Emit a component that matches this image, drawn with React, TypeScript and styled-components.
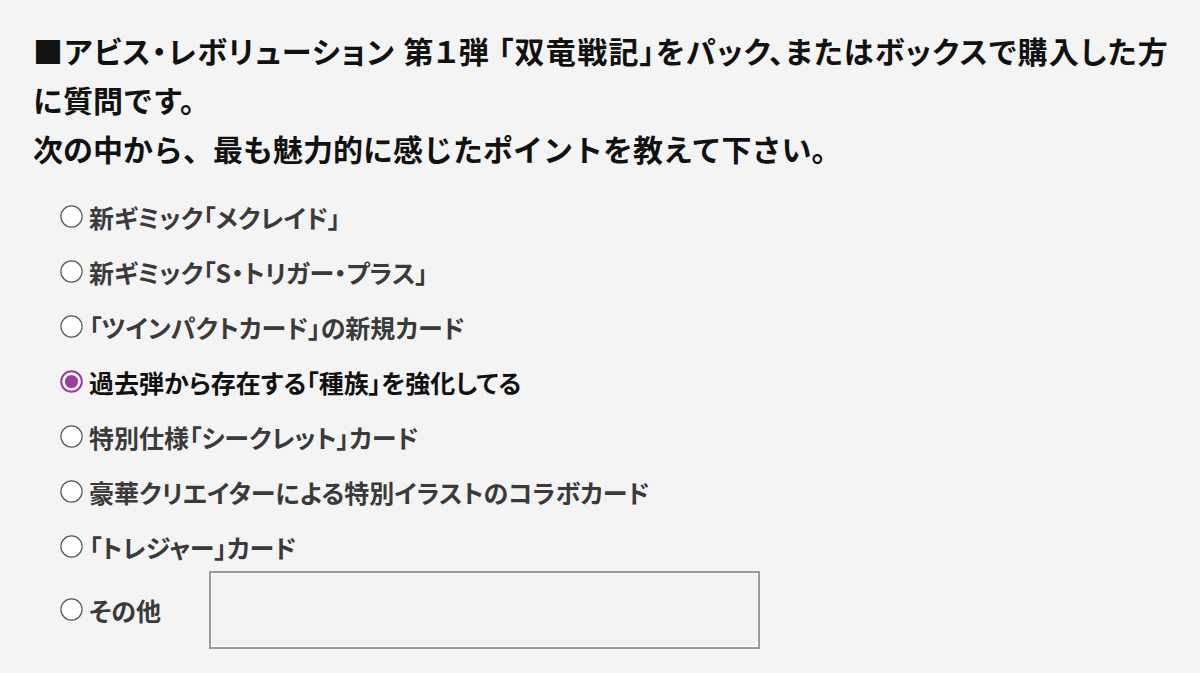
import React from "react";
import styled, { createGlobalStyle } from "styled-components";

const Global = createGlobalStyle`
  html, body { margin: 0; padding: 0; background: #f4f4f4; }
  body { font-family: "Noto Sans CJK JP", "Noto Sans", sans-serif; }
`;

const Page = styled.div`
  width: 1200px;
  height: 673px;
  box-sizing: border-box;
  padding: 26px 0 0 33px;
  background: #f4f4f4;
  overflow: hidden;
`;

const Question = styled.h1`
  margin: 0;
  font-size: 30px;
  line-height: 49px;
  font-weight: 700;
  color: #111;
  white-space: nowrap;
`;

const Line = styled.span<{ $palt?: boolean }>`
  display: block;
  font-feature-settings: ${(p) => (p.$palt ? '"palt"' : "normal")};
  letter-spacing: ${(p) => (p.$palt ? "1.3px" : "0")};
`;

const Options = styled.div`
  display: flex;
  flex-direction: column;
  margin-top: 16px;
  padding-left: 27px;
`;

const Row = styled.label<{ $h?: number }>`
  display: flex;
  align-items: center;
  height: ${(p) => p.$h ?? 55}px;
  font-size: 25px;
  font-weight: 700;
  font-feature-settings: "palt";
  color: #3a3a3a;
  white-space: nowrap;
`;

const Label = styled.span<{ $checked?: boolean; $width?: number }>`
  margin-left: 6px;
  color: ${(p) => (p.$checked ? "#111" : "#3a3a3a")};
  ${(p) => (p.$width ? `width: ${p.$width}px; flex: none;` : "")}
`;

const RadioSvg = styled.svg`
  width: 23px;
  height: 23px;
  flex: none;
`;

const Radio = ({ checked }: { checked?: boolean }) => (
  <RadioSvg viewBox="0 0 23 23">
    {checked ? (
      <>
        <circle cx="11.5" cy="11.5" r="10.3" fill="#fff" stroke="#9a3f9e" strokeWidth="2" />
        <circle cx="11.5" cy="11.5" r="6.6" fill="#9a3f9e" />
      </>
    ) : (
      <circle cx="11.5" cy="11.5" r="10.6" fill="#fff" stroke="#5a5a5a" strokeWidth="1.2" />
    )}
  </RadioSvg>
);

const OtherBox = styled.div`
  width: 551px;
  height: 78px;
  box-sizing: border-box;
  border: 2px solid #9a9a9a;
  box-shadow: inset 0 0 0 1px #fff;
  background: #f2f2f2;
  flex: none;
`;

const options = [
  "新ギミック「メクレイド」",
  "新ギミック「S・トリガー・プラス」",
  "「ツインパクトカード」の新規カード",
  "過去弾から存在する「種族」を強化してる",
  "特別仕様「シークレット」カード",
  "豪華クリエイターによる特別イラストのコラボカード",
  "「トレジャー」カード",
];

export default function App() {
  return (
    <Page>
      <Global />
      <Question>
        <Line $palt>■アビス・レボリューション 第１弾 「双竜戦記」をパック、またはボックスで購入した方</Line>
        <Line>に質問です。</Line>
        <Line>次の中から、最も魅力的に感じたポイントを教えて下さい。</Line>
      </Question>
      <Options>
        {options.map((o, i) => (
          <Row key={o}>
            <Radio checked={i === 3} />
            <Label $checked={i === 3}>{o}</Label>
          </Row>
        ))}
        <Row $h={71}>
          <Radio />
          <Label $width={120}>その他</Label>
          <OtherBox />
        </Row>
      </Options>
    </Page>
  );
}
